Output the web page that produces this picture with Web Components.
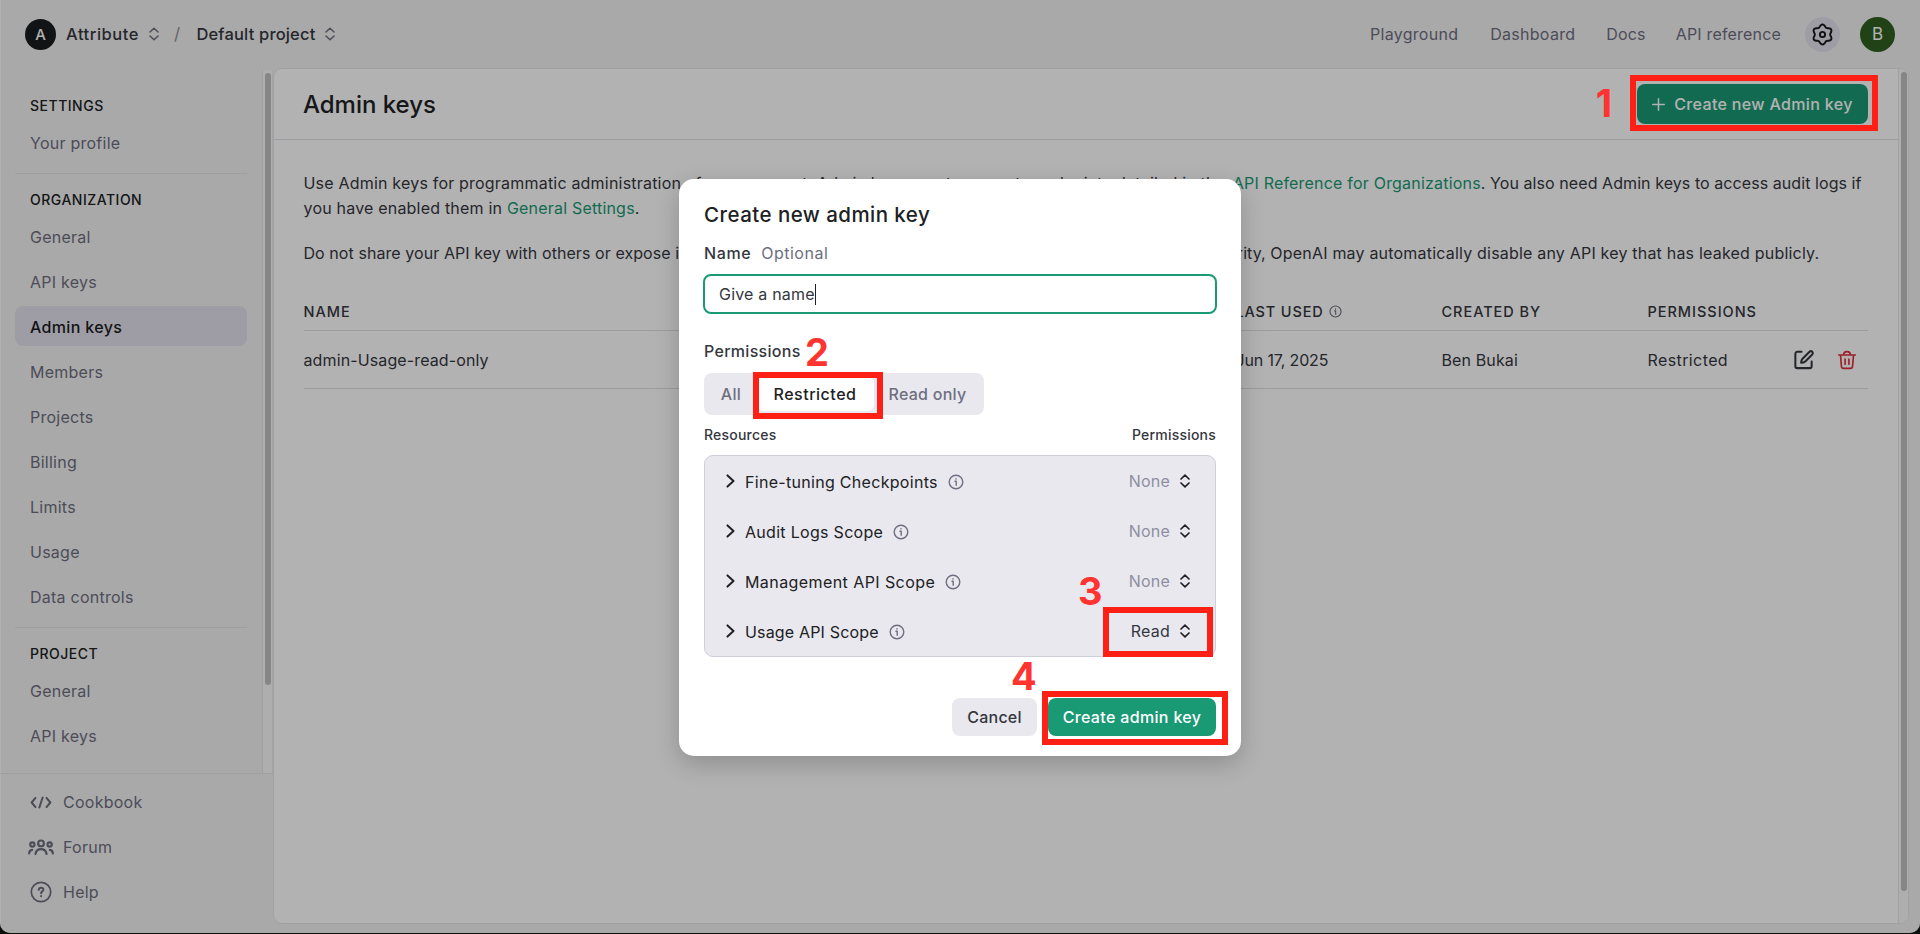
<!DOCTYPE html>
<html lang="en">
<head>
<meta charset="utf-8">
<title>Admin keys</title>
<style>
  html, body {
    margin: 0;
    height: 100%;
    background: #0a0f0a;
    overflow: hidden;
  }
  body {
    font-family: Inter, "Liberation Sans", sans-serif;
    font-size: 16px;
    color: #353740;
  }
</style>
</head>
<body>
<admin-app></admin-app>

<script>
// Six-lobed gear outline, lobes at top and bottom
function gearPath() {
  const pts = [];
  for (let d = 0; d < 360; d += 5) {
    const a = d * Math.PI / 180;
    const r = 9.2 - 1.25 * Math.cos(6 * a);
    pts.push((12 + r * Math.cos(a)).toFixed(2) + ' ' + (12 + r * Math.sin(a)).toFixed(2));
  }
  return 'M' + pts.join('L') + 'Z';
}

const ICONS = {
  updown: ['0 0 12 16', '<path d="M2 6 6 2.2l4 3.800M2 10l4 3.800 4-3.800"/>'],
  gear: ['0 0 24 24', `<path d="${gearPath()}"/><circle cx="12" cy="12" r="2.700"/>`],
  plus: ['0 0 14 14', '<path d="M7 .8v12.4M.8 7h12.4"/>'],
  info: ['0 0 16 16', '<circle cx="8" cy="8" r="6.800"/><path d="M7 7.300h1.200v4M8 4.600v.5"/>'],
  chevron: ['0 0 10 14', '<path d="m1.500 1.400 6 5.600-6 5.600"/>'],
  edit: ['0 0 24 24', '<path d="M10 4H5.500A2 2 0 0 0 3.500 6v13a2 2 0 0 0 2 2h13a2 2 0 0 0 2-2V14"/><path d="M9.500 15.500c0-2 .6-3.400 1.500-4.300l7.300-7.300a1.900 1.900 0 0 1 2.800 2.800L13.800 14c-1 1-2.300 1.500-4.300 1.500Z"/>'],
  trash: ['0 0 24 24', '<path d="M2 6h20M8 6c0-2.500 1.500-4 4-4s4 1.500 4 4M4.200 6l1.100 13.500A2.700 2.700 0 0 0 8 22h8a2.700 2.700 0 0 0 2.700-2.500L19.800 6M9.700 11v6M14.300 11v6"/>'],
  code: ['0 0 24 14', '<path d="M6 2 1.800 7 6 12M18 2l4.200 5L18 12M13.800 1.500l-3.600 11"/>'],
  people: ['0 0 28 18', '<circle cx="14" cy="4.600" r="3.100"/><circle cx="4.700" cy="5.800" r="2.300"/><circle cx="23.300" cy="5.800" r="2.300"/><path d="M8 16c.5-3.400 2.700-5.300 6-5.300s5.500 1.900 6 5.300M1.200 15.500c.1-2.200 1.300-3.700 3.300-3.900M26.800 15.500c-.1-2.200-1.300-3.700-3.300-3.900"/>'],
  help: ['0 0 22 22', '<circle cx="11" cy="11" r="9.700"/><path stroke-width="2" d="M8.700 8.800c.2-1.300 1.100-2 2.400-2 1.400 0 2.300.8 2.300 1.900 0 1.700-2.300 1.700-2.300 3.500M11.100 15v.3"/>']
};

// Stroke icon: <ui-icon name="gear" w="20" h="20" stroke="2">
class UiIcon extends HTMLElement {
  connectedCallback() {
    const [box, body] = ICONS[this.getAttribute('name')];
    const w = this.getAttribute('w') || 16;
    const h = this.getAttribute('h') || w;
    this.attachShadow({ mode: 'open' }).innerHTML = `
      <style>
        :host { display: inline-flex; flex: none; }
        svg { display: block; }
      </style>
      <svg width="${w}" height="${h}" viewBox="${box}" fill="none" stroke="currentColor"
        stroke-width="${this.getAttribute('stroke') || 1.6}" stroke-linecap="round" stroke-linejoin="round">${body}</svg>`;
  }
}
customElements.define('ui-icon', UiIcon);

class AppHeader extends HTMLElement {
  constructor() {
    super();
    this.attachShadow({ mode: 'open' }).innerHTML = `
      <style>
        :host {
          display: flex;
          align-items: center;
          justify-content: space-between;
          height: 68px;
          box-sizing: border-box;
          padding: 0 25px;
          color: #6e6e80;
        }
        div, nav { display: flex; align-items: center; }
        .avatar {
          justify-content: center;
          width: 31px;
          height: 31px;
          border-radius: 50%;
          background: #1b1c1f;
          color: #fff;
          font-size: 15px;
          font-weight: 500;
        }
        b { font-weight: 500; color: #353740; font-size: 16.5px; }
        .org { margin: 0 9px 0 10px; letter-spacing: .55px; }
        .slash { margin: 0 16px 0 14px; color: #8e8ea0; font-size: 17px; }
        .project { margin-right: 9px; letter-spacing: .17px; }
        .gear {
          justify-content: center;
          width: 35px;
          height: 35px;
          border-radius: 50%;
          background: #e2e1ec;
          color: #17171b;
          margin: 0 20px 0 24px;
        }
        .user { width: 35px; height: 35px; background: #305f22; font-weight: 400; font-size: 17px; }
        span { white-space: nowrap; letter-spacing: .18px; }
        .play { margin-right: 32px; letter-spacing: .28px; }
        .dash { margin-right: 31px; letter-spacing: .28px; }
        .docs { margin-right: 30px; }
      </style>
      <div>
        <div class="avatar">A</div>
        <b class="org">Attribute</b>
        <ui-icon name="updown" w="12" h="16" stroke="1.5"></ui-icon>
        <span class="slash">/</span>
        <b class="project">Default project</b>
        <ui-icon name="updown" w="12" h="16" stroke="1.5"></ui-icon>
      </div>
      <nav>
        <span class="play">Playground</span>
        <span class="dash">Dashboard</span>
        <span class="docs">Docs</span>
        <span>API reference</span>
        <div class="gear"><ui-icon name="gear" w="23" stroke="2"></ui-icon></div>
        <div class="avatar user">B</div>
      </nav>`;
  }
}
customElements.define('app-header', AppHeader);

class NavItem extends HTMLElement {
  constructor() {
    super();
    this.attachShadow({ mode: 'open' }).innerHTML = `
      <style>
        :host {
          display: flex;
          align-items: center;
          height: 40px;
          margin-bottom: 5px;
          padding: 2px 15px 0;
          box-sizing: border-box;
          border-radius: 8px;
          color: #6e6e80;
          letter-spacing: .25px;
        }
        :host([active]) {
          background: #e2e1ec;
          color: #1b1c20;
          font-weight: 500;
          letter-spacing: .35px;
        }
      </style>
      <slot></slot>`;
  }
}
customElements.define('nav-item', NavItem);

class NavSection extends HTMLElement {
  constructor() {
    super();
    this.attachShadow({ mode: 'open' }).innerHTML = `
      <style>
        :host { display: block; }
        :host(:not(:first-of-type)) { border-top: 1px solid #e3e3ea; margin-top: 11px; }
        h2 {
          margin: 0;
          padding: 17px 15px 7px;
          font-size: 14px;
          line-height: 18px;
          font-weight: 500;
          letter-spacing: .5px;
          color: #202123;
        }
      </style>
      <h2>${this.getAttribute('label')}</h2>
      <slot></slot>`;
  }
}
customElements.define('nav-section', NavSection);

class SideBar extends HTMLElement {
  constructor() {
    super();
    this.attachShadow({ mode: 'open' }).innerHTML = `
      <style>
        :host { display: flex; flex-direction: column; width: 273px; flex: none; }
        .scroll { display: flex; height: 706px; border-bottom: 1px solid #e5e5e5; box-sizing: border-box; }
        .list { flex: 1; padding: 12px 15px 0; }
        .track {
          width: 9px;
          margin-top: 2px;
          border-left: 1px solid #e7e7e7;
          border-right: 1px solid #ebebeb;
          background: #fafafa;
        }
        .thumb { width: 6px; height: 612px; margin: 3px 0 0 2px; border-radius: 3px; background: #c1c1c1; }
        .foot { padding: 7px 15px 0; }
        i { display: flex; justify-content: center; width: 26px; margin: 0 9px 0 -2px; }
      </style>
      <div class="scroll">
        <div class="list">
          <nav-section label="SETTINGS">
            <nav-item>Your profile</nav-item>
          </nav-section>
          <nav-section label="ORGANIZATION">
            <nav-item>General</nav-item>
            <nav-item>API keys</nav-item>
            <nav-item active>Admin keys</nav-item>
            <nav-item>Members</nav-item>
            <nav-item>Projects</nav-item>
            <nav-item>Billing</nav-item>
            <nav-item>Limits</nav-item>
            <nav-item>Usage</nav-item>
            <nav-item>Data controls</nav-item>
          </nav-section>
          <nav-section label="PROJECT">
            <nav-item>General</nav-item>
            <nav-item>API keys</nav-item>
          </nav-section>
        </div>
        <div class="track"><div class="thumb"></div></div>
      </div>
      <div class="foot">
        <nav-item><i><ui-icon name="code" w="22" h="13" stroke="2.2"></ui-icon></i>Cookbook</nav-item>
        <nav-item><i><ui-icon name="people" w="26" h="17" stroke="2.3"></ui-icon></i>Forum</nav-item>
        <nav-item><i><ui-icon name="help" w="22" stroke="1.7"></ui-icon></i>Help</nav-item>
      </div>`;
  }
}
customElements.define('side-bar', SideBar);

class UiButton extends HTMLElement {
  constructor() {
    super();
    this.attachShadow({ mode: 'open' }).innerHTML = `
      <style>
        :host {
          display: inline-flex;
          align-items: center;
          justify-content: center;
          box-sizing: border-box;
          height: 38px;
          border-radius: 8px;
          background: #e9e8ef;
          color: #353740;
          font-weight: 500;
          letter-spacing: .2px;
          white-space: nowrap;
        }
        :host([primary]) { background: #1a9975; color: #fff; letter-spacing: .34px; }
      </style>
      <slot></slot>`;
  }
}
customElements.define('ui-button', UiButton);

class KeysTable extends HTMLElement {
  constructor() {
    super();
    this.attachShadow({ mode: 'open' }).innerHTML = `
      <style>
        :host { display: block; }
        .row {
          display: grid;
          grid-template-columns: 520px 206px 206px 206px 206px 1fr;
          align-items: center;
          height: 57px;
          border-bottom: 1px solid #e0e0e6;
          letter-spacing: .12px;
        }
        .head {
          height: 38px;
          font-size: 14.5px;
          font-weight: 500;
          letter-spacing: .97px;
        }
        .head .used { letter-spacing: .85px; }
        .head ui-icon { margin-left: 5px; vertical-align: -1px; color: #6e6e80; }
        .date { letter-spacing: -.15px; }
        .perm { margin-right: auto; letter-spacing: .4px; }
        .tools { display: flex; align-items: center; gap: 22px; padding-right: 11px; }
        .trash { color: #e02e3d; }
      </style>
      <div class="row head">
        <span>NAME</span><span>KEY</span><span>CREATED</span>
        <span class="used">LAST USED<ui-icon name="info" w="13" stroke="1.4"></ui-icon></span>
        <span>CREATED BY</span><span>PERMISSIONS</span>
      </div>
      <div class="row">
        <span>admin-Usage-read-only</span><span></span><span class="date">Jun 17, 2025</span>
        <span class="date">Jun 17, 2025</span><span>Ben Bukai</span>
        <div class="tools">
          <span class="perm">Restricted</span>
          <ui-icon name="edit" w="23" stroke="2.1"></ui-icon>
          <ui-icon class="trash" name="trash" w="20" stroke="2"></ui-icon>
        </div>
      </div>`;
  }
}
customElements.define('keys-table', KeysTable);

class KeysPanel extends HTMLElement {
  constructor() {
    super();
    this.attachShadow({ mode: 'open' }).innerHTML = `
      <style>
        :host {
          display: flex;
          width: 1636px;
          height: 856px;
          box-sizing: border-box;
          border: 1px solid #e7e7ec;
          border-radius: 9px;
          background: #fff;
          overflow: hidden;
        }
        .main { flex: 1; }
        header {
          display: flex;
          align-items: center;
          justify-content: space-between;
          height: 71px;
          box-sizing: border-box;
          padding: 0 30px 0 29px;
          border-bottom: 1px solid #e3e3e9;
        }
        h1 { margin: 0; font-size: 24px; font-weight: 500; letter-spacing: -.02px; color: #202123; }
        ui-button { width: 231px; height: 40px; gap: 9px; }
        .body { padding: 31px 30px 0 29.5px; }
        p { margin: 0 0 20px; line-height: 25px; white-space: nowrap; letter-spacing: .07px; }
        a { color: #1a9975; }
        .wide { letter-spacing: .2px; }
        .mid { display: inline-block; width: 547px; height: 25px; vertical-align: top; letter-spacing: .17px; }
        keys-table { margin-top: 26px; }
        .track { width: 9px; border-left: 1px solid #e7e7e7; background: #fafafa; }
        .thumb { width: 6px; height: 819px; margin: 3px 0 0 2px; border-radius: 3px; background: #c1c1c1; }
      </style>
      <div class="main">
        <header>
          <h1>Admin keys</h1>
          <ui-button primary><ui-icon name="plus" w="13" stroke="1.6"></ui-icon>Create new Admin key</ui-button>
        </header>
        <div class="body">
          <p><span class="wide">Use Admin keys for programmatic administration </span><span class="mid">of your account. Admin keys grant access to endpoints detailed in the</span><a class="wide">API Reference for Organizations</a>. You also need Admin keys to access audit logs if<br><span class="wide">you have enabled them in <a>General Settings</a>.</span></p>
          <p>Do not share your API key with others or expose it in the browser or other client-side code. To protect your account's security, <span class="wide">OpenAI may automatically disable any API key that has leaked publicly.</span></p>
          <keys-table></keys-table>
        </div>
      </div>
      <div class="track"><div class="thumb"></div></div>`;
  }
}
customElements.define('keys-panel', KeysPanel);

class ScopeRow extends HTMLElement {
  constructor() {
    super();
    const value = this.getAttribute('value') || 'None';
    this.attachShadow({ mode: 'open' }).innerHTML = `
      <style>
        :host { display: flex; align-items: center; height: 50px; padding: 0 24px 0 21px; color: #202123; letter-spacing: .3px; }
        .name { margin: 2px 10px 0 9px; }
        .info { color: #6e6e80; margin-top: 2px; }
        .value { margin: 0 9px 0 auto; letter-spacing: .2px; color: ${value === 'None' ? '#8e8ea0' : '#353740'}; }
      </style>
      <ui-icon name="chevron" w="10" h="14" stroke="2"></ui-icon>
      <span class="name"><slot></slot></span>
      <ui-icon class="info" name="info" w="16" stroke="1.4"></ui-icon>
      <span class="value">${value}</span>
      <ui-icon name="updown" w="12" h="16" stroke="1.7"></ui-icon>`;
  }
}
customElements.define('scope-row', ScopeRow);

class KeyDialog extends HTMLElement {
  constructor() {
    super();
    this.attachShadow({ mode: 'open' }).innerHTML = `
      <style>
        :host {
          display: flex;
          flex-direction: column;
          width: 562px;
          height: 577px;
          box-sizing: border-box;
          padding: 22px 25px 20px;
          border-radius: 15px;
          background: #fff;
          box-shadow: 0 8px 24px rgba(0, 0, 0, .2);
        }
        h2 { margin: 0 0 12px; font-size: 20.5px; line-height: 28px; font-weight: 500; letter-spacing: .45px; color: #202123; }
        .label { line-height: 25px; font-weight: 500; letter-spacing: .3px; }
        .label b { font-weight: 500; letter-spacing: .6px; }
        .label span { margin-left: 10px; font-weight: 400; letter-spacing: .5px; color: #6e6e80; }
        .input {
          display: flex;
          align-items: center;
          height: 40px;
          box-sizing: border-box;
          margin: 8px -1px 25px;
          padding-left: 14px;
          border: 2px solid #1a9975;
          border-radius: 8px;
          letter-spacing: .2px;
        }
        .caret { width: 1px; height: 21px; background: #202123; }
        .tabs {
          display: flex;
          align-items: center;
          width: 280px;
          height: 42px;
          box-sizing: border-box;
          margin-top: 9px;
          border-radius: 8px;
          background: #e9e8ef;
          color: #6e6e80;
          font-weight: 500;
        }
        .tabs span { display: flex; align-items: center; justify-content: center; height: 34px; border-radius: 6px; }
        .tabs .all { width: 54px; letter-spacing: .3px; }
        .tabs .on { width: 116px; box-sizing: border-box; padding-right: 2px; background: #fff; color: #202123; letter-spacing: .52px; }
        .tabs .read { width: 107px; letter-spacing: .25px; }
        .cols { display: flex; justify-content: space-between; margin: 10px 0; font-size: 14px; line-height: 20px; font-weight: 500; letter-spacing: .22px; }
        .scopes { border: 1px solid #cfcedb; border-radius: 9px; background: #e9e8ef; }
        .more { letter-spacing: .42px; }
        .less { letter-spacing: .17px; }
        .actions { display: flex; justify-content: flex-end; gap: 11px; margin-top: auto; }
        .cancel { width: 85px; }
        .create { width: 168px; }
      </style>
      <h2>Create new admin key</h2>
      <div class="label"><b>Name</b><span>Optional</span></div>
      <div class="input">Give a name<div class="caret"></div></div>
      <div class="label">Permissions</div>
      <div class="tabs"><span class="all">All</span><span class="on">Restricted</span><span class="read">Read only</span></div>
      <div class="cols"><span>Resources</span><span>Permissions</span></div>
      <div class="scopes">
        <scope-row>Fine-tuning Checkpoints</scope-row>
        <scope-row>Audit Logs Scope</scope-row>
        <scope-row class="more">Management API Scope</scope-row>
        <scope-row class="less" value="Read">Usage API Scope</scope-row>
      </div>
      <div class="actions">
        <ui-button class="cancel">Cancel</ui-button>
        <ui-button class="create" primary>Create admin key</ui-button>
      </div>`;
  }
}
customElements.define('key-dialog', KeyDialog);

// Red frame with a step number, laid over the page: box="x y w h" num="x y"
class StepMark extends HTMLElement {
  constructor() {
    super();
    const [x, y, w, h] = this.getAttribute('box').split(' ');
    const [nx, ny] = this.getAttribute('num').split(' ');
    this.attachShadow({ mode: 'open' }).innerHTML = `
      <style>
        :host { display: block; }
        .frame {
          position: absolute;
          left: ${x}px; top: ${y}px; width: ${w}px; height: ${h}px;
          box-sizing: border-box;
          border: 6px solid #ff2015;
        }
        .num {
          position: absolute;
          left: ${nx}px; top: ${ny}px;
          width: 24px;
          text-align: center;
          font: bold 38px/40px Inter, sans-serif;
          color: #ff3430;
        }
      </style>
      <div class="frame"></div>
      <div class="num"><slot></slot></div>`;
  }
}
customElements.define('step-mark', StepMark);

class AdminApp extends HTMLElement {
  constructor() {
    super();
    this.attachShadow({ mode: 'open' }).innerHTML = `
      <style>
        :host {
          display: block;
          position: relative;
          width: 1920px;
          height: 933px;
          border-radius: 0 0 10px 10px;
          background: linear-gradient(to right, #fff 1px, #f3f3f3 1px);
          overflow: hidden;
        }
        .body { display: flex; }
        .shade {
          position: absolute;
          inset: 0 0 -1px;
          display: flex;
          align-items: center;
          justify-content: center;
          padding-top: 1px;
          background: rgba(0, 0, 0, .3);
        }
      </style>
      <app-header></app-header>
      <div class="body">
        <side-bar></side-bar>
        <keys-panel></keys-panel>
      </div>
      <div class="shade">
        <key-dialog></key-dialog>
        <step-mark box="1630 75 248 56" num="1592 83">1</step-mark>
        <step-mark box="753 372 130 47" num="805 332">2</step-mark>
        <step-mark box="1103 607 110 50" num="1078 571">3</step-mark>
        <step-mark box="1042 691 186 54" num="1011 656">4</step-mark>
      </div>`;
  }
}
customElements.define('admin-app', AdminApp);
</script>
</body>
</html>
